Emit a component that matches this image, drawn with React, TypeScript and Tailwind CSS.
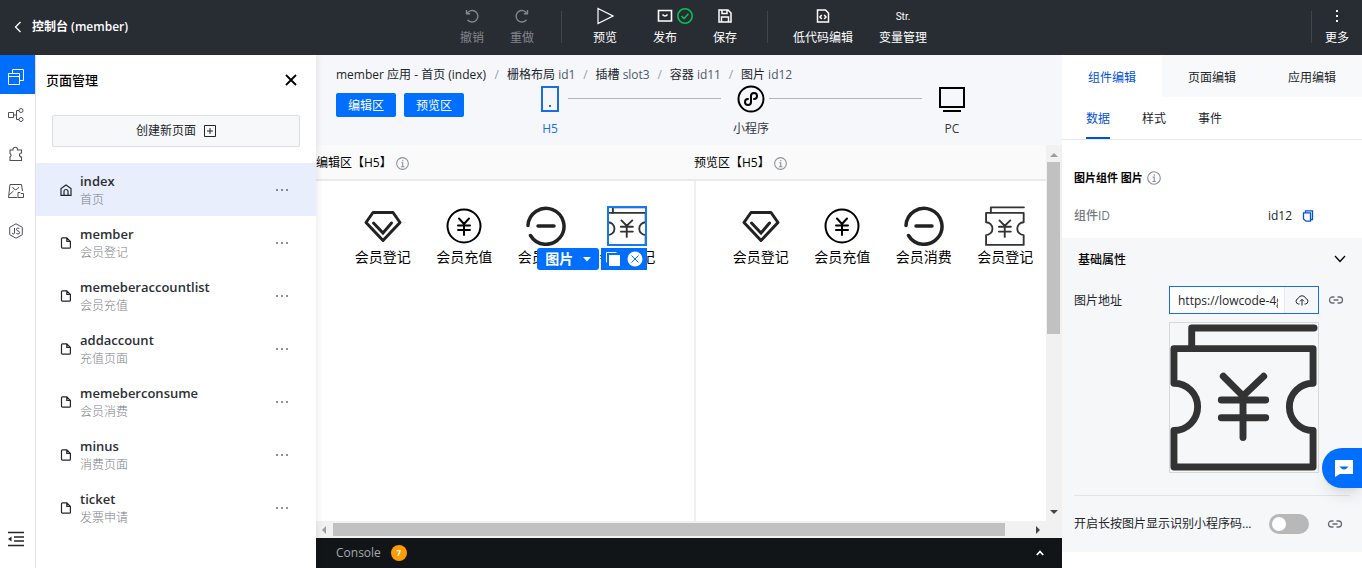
import { useState, type ReactNode } from 'react'
import clsx from 'clsx'

const pages = [
  { name: 'index', title: '首页' },
  { name: 'member', title: '会员登记' },
  { name: 'memeberaccountlist', title: '会员充值' },
  { name: 'addaccount', title: '充值页面' },
  { name: 'memeberconsume', title: '会员消费' },
  { name: 'minus', title: '消费页面' },
  { name: 'ticket', title: '发票申请' },
]

const crumbs = [
  { label: '栅格布局', id: 'id1' },
  { label: '插槽', id: 'slot3' },
  { label: '容器', id: 'id11' },
  { label: '图片', id: 'id12' },
]

type IconProps = { size?: number; box?: number; className?: string; children: ReactNode; width?: number }

const Icon = ({ size = 16, box = 16, width = 1, className, children }: IconProps) => (
  <svg
    width={size}
    height={size}
    viewBox={`0 0 ${box} ${box}`}
    fill="none"
    stroke="currentColor"
    strokeWidth={width}
    className={clsx('shrink-0', className)}
    aria-hidden="true"
  >
    {children}
  </svg>
)

const TicketIcon = ({ size = 40 }: { size?: number }) => (
  <Icon size={size} box={150} width={7} className="text-[#333]">
    <g strokeLinejoin="round" strokeLinecap="round">
      <path d="M22 25V5H146" />
      <path d="M4 26H145V61A24 24 0 0 0 145 109V146H4V109A24 24 0 0 0 4 61Z" />
      <path d="M54 54L74 74L95 54M74 74V116M52 78H97M52 96H97" />
    </g>
  </Icon>
)

const DiamondIcon = () => (
  <Icon size={40} box={40} width={3} className="text-[#222]">
    <path d="M10 6.500H30L37 16.500L20 34.500L3 16.500Z" strokeLinejoin="round" />
    <path d="M10.500 17L20 27L28.500 17" strokeLinecap="round" />
  </Icon>
)

const CoinIcon = () => (
  <Icon size={40} box={40} width={2} className="text-black">
    <circle cx="20" cy="20" r="16.500" />
    <path d="M15 12.500L20 18L25 12.500M20 18V29M14 19.500H26M14 24H26" strokeLinecap="round" />
  </Icon>
)

const MinusIcon = () => (
  <Icon size={40} box={40} width={3.5} className="text-[#222]">
    <path d="M2 19.500A18 18 0 1 1 4.500 29.500" strokeLinecap="round" />
    <path d="M12 20H28" strokeLinecap="round" />
  </Icon>
)

const InfoIcon = ({ size = 13 }: { size?: number }) => (
  <Icon size={size} className="text-[#8a8f98]" width={1.3}>
    <circle cx="8" cy="8" r="7.200" />
    <path d="M6.500 7H8.300V12M6.200 12H10.200M8.300 3.800V5.300" />
  </Icon>
)

const LinkIcon = () => (
  <Icon className="text-[#666b75]" width={1.3}>
    <path d="M6.500 5H4.500a3 3 0 0 0 0 6H6.500M9.500 5H11.500a3 3 0 0 1 0 6H9.500M5.500 8H10.500" />
  </Icon>
)

const FileIcon = () => (
  <Icon size={12} box={12} width={1.2}>
    <path d="M2.500 .800H6.800L10.400 4.400V10.200a1 1 0 0 1-1 1H2.500a1 1 0 0 1-1-1V1.800a1 1 0 0 1 1-1ZM6.800 .800V4.400H10.400" />
  </Icon>
)

const HomeIcon = () => (
  <Icon size={12} box={12} width={1.2}>
    <path d="M1 11.300V4.500L6 .900L11 4.500V11.300ZM4 11V7.500a2 2 0 0 1 4 0V11" />
  </Icon>
)

type ToolProps = { label: string; className: string; children: ReactNode }

const Tool = ({ label, className, children }: ToolProps) => (
  <button className={clsx('flex flex-col items-center shrink-0', className)}>
    <span className="flex h-5 items-center justify-center gap-1">{children}</span>
    <span className="mt-0.5 h-5 text-xs leading-5">{label}</span>
  </button>
)

const Divider = () => <span className="h-8 w-px shrink-0 bg-[#41464e]" />

const Header = () => (
  <header className="flex h-[55px] shrink-0 items-center bg-[#282c33] pb-px text-white">
    <div className="flex flex-1 items-center">
      <a href="#console" className="flex items-center gap-1.5 pl-2.5 text-xs font-semibold">
        <Icon width={1.3}>
          <path d="M10.500 3L5.500 8L10.500 13" />
        </Icon>
        控制台 (member)
      </a>
    </div>
    <div className="flex items-center pl-6">
      <Tool label="撤销" className="w-[50px] text-[#83868b]">
        <Icon width={1.4}>
          <path d="M2.500 2V5.700H6.200M3 5.500A5.800 5.800 0 1 1 3.500 11.800" />
        </Icon>
      </Tool>
      <Tool label="重做" className="w-[50px] text-[#83868b]">
        <Icon width={1.4}>
          <path d="M13.500 2V5.700H9.800M13 5.500A5.800 5.800 0 1 0 12.500 11.800" />
        </Icon>
      </Tool>
      <span className="flex w-7 justify-center">
        <Divider />
      </span>
      <Tool label="预览" className="w-[60px]">
        <Icon size={18} box={18} width={1.2}>
          <path d="M2 1.500L17 9L2 16.500Z" />
        </Icon>
      </Tool>
      <div className="relative">
        <Tool label="发布" className="w-[60px]">
          <Icon width={1.6}>
            <path d="M1.500 2.500H14.500V13H1.500ZM5.500 6.500Q8 9.500 10.500 6.500" />
          </Icon>
        </Tool>
        <Icon className="absolute top-0.5 left-[42px] text-[#0abf5b]" width={1.6}>
          <circle cx="8" cy="8" r="7.200" />
          <path d="M4.500 8L7 10.500L11.500 5.800" />
        </Icon>
      </div>
      <Tool label="保存" className="w-[60px]">
        <Icon width={1.5}>
          <path d="M2 2H11L14 5V14H2ZM5 2V5.500H10V2M4.500 14V9H11.500V14" />
        </Icon>
      </Tool>
      <span className="flex w-6 justify-center">
        <Divider />
      </span>
      <Tool label="低代码编辑" className="w-[88px]">
        <Icon width={1.5}>
          <path d="M2.500 2H10.500L13.500 5V14H2.500ZM6.800 7L5 9L6.800 11M9.200 7L11 9L9.200 11" />
        </Icon>
      </Tool>
      <Tool label="变量管理" className="w-[72px]">
        <span className="font-['Roboto',sans-serif] text-[10px]">Str.</span>
      </Tool>
    </div>
    <div className="flex flex-1 items-center justify-end">
      <Divider />
      <Tool label="更多" className="w-[50px]">
        <Icon>
          <g fill="currentColor" stroke="none">
            <path d="M7 2h2v2H7zM7 7h2v2H7zM7 12h2v2H7z" />
          </g>
        </Icon>
      </Tool>
    </div>
  </header>
)

const Rail = () => (
  <nav className="flex w-9 shrink-0 flex-col border-r border-[#e3e5ea] bg-white text-[#4b4f57]">
    <button aria-label="页面管理" className="flex h-[39px] items-center justify-center bg-[#006eff] pt-1 pr-1 text-white">
      <Icon>
        <path d="M.500 4.500H11.500V15.500H.500ZM.500 7.500H11.500M4.500 4V.500H15.500V11.500H12" />
      </Icon>
    </button>
    <button aria-label="数据源" className="flex h-[39px] items-center justify-center pt-0.5 pr-1">
      <Icon>
        <path d="M.500 5.500H5.500V10.500H.500ZM5.500 8H8M11 3.500H8.500V12.500H11" />
        <circle cx="13" cy="3.500" r="2" />
        <circle cx="13" cy="12.500" r="2" />
      </Icon>
    </button>
    <button aria-label="组件" className="flex h-[39px] items-center justify-center pt-0.5 pr-1">
      <Icon width={1.1}>
        <path d="M2 4H5A2.300 2.300 0 1 1 9.500 4H13.500V7A2 2 0 1 0 13.500 11V14.500H2V11A2 2 0 0 0 2 7.500Z" />
      </Icon>
    </button>
    <button aria-label="素材" className="flex h-[38px] items-center justify-center pr-1">
      <Icon>
        <path d="M9.500 14.500H.500L2 1.500H13.500L14.500 8M4.500 4Q7.500 9.500 11 4M1 12L5.500 8M10 14.500V9.500H12L13 10.500H15.500V14.500Z" />
      </Icon>
    </button>
    <button aria-label="JS" className="flex h-[39px] items-center justify-center pt-0.5 pr-1">
      <Icon>
        <path d="M8 .800L14.300 4.300V11.700L8 15.200L1.700 11.700V4.300Z" />
        <path d="M6.500 5V10Q6.500 11 5.300 11Q4.200 11 4.200 9.800M11.500 6Q11 5 9.800 5Q8.500 5 8.500 6.500Q8.500 7.600 10 8Q11.600 8.300 11.600 9.600Q11.600 11 10 11Q8.700 11 8.300 9.900" />
      </Icon>
    </button>
    <button aria-label="收起" className="mt-auto mb-5 flex justify-center pr-1 text-[#22252b]">
      <Icon size={18} box={18} width={1.6}>
        <path d="M1 2.500H17M7 7H17M7 11H17M1 15.500H17" />
        <path d="M1 9L4.500 6.500V11.500Z" fill="currentColor" stroke="none" />
      </Icon>
    </button>
  </nav>
)

const PagePanel = () => (
  <aside className="z-10 flex w-[280px] shrink-0 flex-col bg-white shadow-[2px_0_6px_rgba(0,0,0,0.08)]">
    <div className="flex h-[50px] items-center justify-between pr-[18px] pl-2.5">
      <h2 className="pt-0.5 text-[13px] font-medium text-black">页面管理</h2>
      <button aria-label="关闭">
        <Icon size={14} box={14} width={1.8} className="text-black">
          <path d="M2 2L12 12M12 2L2 12" />
        </Icon>
      </button>
    </div>
    <button className="mx-4 mt-2.5 flex h-8 items-center justify-center gap-2 rounded-xs border border-[#dcdfe4] bg-[#f7f8f9] text-xs">
      创建新页面
      <Icon size={12} box={12}>
        <path d="M.500 .500H11.500V11.500H.500ZM6 3V9M3 6H9" />
      </Icon>
    </button>
    <ul className="mt-4">
      {pages.map((page, i) => (
        <li
          key={page.name}
          className={clsx('flex h-[53px] items-center pr-7 pl-6', i === 0 && 'bg-[#e8eefb]')}
        >
          {i === 0 ? <HomeIcon /> : <FileIcon />}
          <a href={`#${page.name}`} className="ml-2 flex-1 pt-0.5">
            <span className="block text-[13px] leading-[18px] font-semibold text-[#2b2f36]">{page.name}</span>
            <span className="block text-xs leading-5 font-light text-[#7b7f87]">{page.title}</span>
          </a>
          <button aria-label="更多操作">
            <Icon size={12} box={12}>
              <path d="M0 6H2M5 6H7M10 6H12" />
            </Icon>
          </button>
        </li>
      ))}
    </ul>
  </aside>
)

const Step = ({ label, active, children }: { label: string; active?: boolean; children: ReactNode }) => (
  <button className={clsx('flex w-9 shrink-0 flex-col items-center', active ? 'text-[#1a6fe0]' : 'text-[#33373e]')}>
    <span className={clsx('flex h-7', !active && 'text-black')}>{children}</span>
    <span className="mt-1.5 text-xs leading-5 whitespace-nowrap">{label}</span>
  </button>
)

const StageHead = () => (
  <div className="h-[90px] shrink-0 bg-[#f5f7fa] pt-2.5 pl-5 text-xs">
    <div className="flex h-5 items-center whitespace-nowrap text-[#22252b]">
      <a href="#index">member 应用 - 首页 (index)</a>
      {crumbs.map((c, i) => (
        <span key={c.id} className="flex">
          <span className={clsx('text-center text-[#9aa0a8]', i === 0 ? 'w-[21px]' : 'w-5')}>/</span>
          <a href={`#${c.id}`}>
            {c.label} <span className="text-[#4f5966]">{c.id}</span>
          </a>
        </span>
      ))}
    </div>
    <div className="flex items-start">
      <div className="mt-2 flex gap-2 text-white">
        <button className="h-6 w-[60px] rounded-xs bg-[#006eff] pt-0.5">编辑区</button>
        <button className="h-6 w-[60px] rounded-xs bg-[#006eff] pt-0.5">预览区</button>
      </div>
      <div className="ml-[68px] flex w-[438px] items-start">
        <Step label="H5" active>
          <Icon size={28} box={28} width={2}>
            <path d="M6 2H22V26H6Z" />
            <path d="M13 21H15" />
          </Icon>
        </Step>
        <span className="mt-[13px] mr-3 h-px flex-1 bg-[#b0b5bc]" />
        <Step label="小程序">
          <Icon size={28} box={28} width={2}>
            <circle cx="14" cy="14" r="12.500" />
            <path d="M11 14A3 3 0 1 0 14 17V11A3 3 0 1 1 17 14" strokeLinecap="round" />
          </Icon>
        </Step>
        <span className="mt-[13px] mr-3 h-px flex-1 bg-[#b0b5bc]" />
        <Step label="PC">
          <Icon size={28} box={28} width={2}>
            <path d="M2 3H26V22H2ZM5 26H23" />
          </Icon>
        </Step>
      </div>
    </div>
  </div>
)

const Selection = () => (
  <>
    <span className="absolute inset-0 border-2 border-[#1478f0]" />
    <div className="absolute top-[42px] right-0 z-10 flex gap-0.5 text-white">
      <button className="flex h-[22px] w-[62px] items-center justify-center gap-2.5 rounded-[3px] bg-[#006eff] text-sm font-bold whitespace-nowrap">
        图片
        <Icon size={8} box={8}>
          <path d="M0 2H8L4 6.500Z" fill="currentColor" stroke="none" />
        </Icon>
      </button>
      <div className="flex h-[22px] w-[46px] items-center justify-center gap-1.5 bg-[#006eff]">
        <button aria-label="复制">
          <Icon>
            <path d="M1.500 11.500V1.500H11.500" />
            <path d="M4 4H15V15H4Z" fill="currentColor" stroke="none" />
          </Icon>
        </button>
        <button aria-label="删除">
          <Icon>
            <circle cx="8" cy="8" r="7.500" fill="currentColor" stroke="none" />
            <path d="M4.500 4.500L11.500 11.500M11.500 4.500L4.500 11.500" className="stroke-[#006eff]" />
          </Icon>
        </button>
      </div>
    </div>
  </>
)

const entries = [
  { label: '会员登记', icon: <DiamondIcon /> },
  { label: '会员充值', icon: <CoinIcon /> },
  { label: '会员消费', icon: <MinusIcon /> },
  { label: '会员登记', icon: <TicketIcon /> },
]

const Pane = ({ title, editing }: { title: string; editing?: boolean }) => (
  <section className="flex w-[378px] shrink-0 flex-col">
    <h3 className="flex h-9 shrink-0 items-center border-b-2 border-[#e9eaec] bg-[#fafafa] pt-0.5 text-xs text-black">
      {title}
      <span className="ml-1">
        <InfoIcon />
      </span>
    </h3>
    <div className={clsx('flex-1 bg-white pt-[25px] pr-[26px]', editing ? 'pl-[26px]' : 'border-l-2 border-[#eeeff1] pl-6')}>
      <ul className="grid grid-cols-4">
        {entries.map((e, i) => (
          <li key={i} className="flex flex-col items-center text-sm leading-[22px] text-black">
            <span className="relative">
              {e.icon}
              {editing && i === 3 && <Selection />}
            </span>
            <span className="whitespace-nowrap">{e.label}</span>
          </li>
        ))}
      </ul>
    </div>
  </section>
)

const Arrow = ({ d, dim }: { d: string; dim?: boolean }) => (
  <Icon size={8} box={8} className={dim ? 'text-[#9c9c9c]' : 'text-[#444]'}>
    <path d={d} fill="currentColor" stroke="none" />
  </Icon>
)

const Stage = () => (
  <main className="flex min-w-0 flex-1 flex-col">
    <StageHead />
    <div className="flex min-h-0 flex-1 bg-[#f0f0f0] pr-px">
      <div className="flex min-w-0 flex-1 flex-col">
        <div className="flex min-h-0 flex-1 overflow-hidden bg-white">
          <Pane title="编辑区【H5】" editing />
          <Pane title="预览区【H5】" />
        </div>
        <div className="flex h-[17px] items-center gap-[5px] bg-[#f1f1f1] px-1">
          <Arrow d="M6 0V8L2 4Z" dim />
          <span className="h-[13px] w-[672px] bg-[#c1c1c1]" />
          <span className="ml-auto">
            <Arrow d="M2 0V8L6 4Z" />
          </span>
        </div>
      </div>
      <div className="flex w-[15px] flex-col items-center bg-[#f1f1f1] pt-1.5 pb-[22px]">
        <Arrow d="M0 6H8L4 2Z" dim />
        <span className="mt-[3px] h-[172px] w-[13px] bg-[#c1c1c1]" />
        <span className="mt-auto">
          <Arrow d="M0 2H8L4 6Z" />
        </span>
      </div>
    </div>
    <footer className="flex h-[30px] shrink-0 items-center bg-[#121518] pr-[18px] pl-5 text-xs text-[#a6a9ad]">
      Console
      <span className="ml-2.5 flex size-4 items-center justify-center rounded-full bg-[#ff9c00] text-[8px] font-bold text-white">
        7
      </span>
      <button aria-label="展开" className="ml-auto text-white">
        <Icon size={8} box={8} width={1.8}>
          <path d="M.800 6L4 2.500L7.200 6" />
        </Icon>
      </button>
    </footer>
  </main>
)

const SettingsPanel = () => {
  const [tab, setTab] = useState('组件编辑')
  const [sub, setSub] = useState('数据')
  const [url, setUrl] = useState('https://lowcode-4gxample')

  return (
    <aside className="flex w-[300px] shrink-0 flex-col bg-white text-xs">
      <div className="flex h-[42px] shrink-0">
        {['组件编辑', '页面编辑', '应用编辑'].map(t => (
          <button
            key={t}
            onClick={() => setTab(t)}
            className={clsx('flex-1 pt-1', t === tab ? 'text-[#0052d9]' : 'bg-[#f8f9fa]')}
          >
            {t}
          </button>
        ))}
      </div>
      <div className="flex h-[43px] shrink-0 gap-8 border-b border-[#e6e8eb] px-6">
        {['数据', '样式', '事件'].map(t => (
          <button
            key={t}
            onClick={() => setSub(t)}
            className={clsx('border-b-2 pt-1', t === sub ? 'border-[#0052d9] text-[#0052d9]' : 'border-transparent')}
          >
            {t}
          </button>
        ))}
      </div>
      <div className="px-3">
        <h3 className="mt-7 flex h-5 items-center gap-1 text-[11px] font-bold text-black">
          图片组件 图片 <InfoIcon size={14} />
        </h3>
        <div className="mt-[18px] flex h-5 items-center pr-9">
          <span className="font-medium text-[#73777f]">组件ID</span>
          <span className="mr-2.5 ml-auto">id12</span>
          <button aria-label="复制ID" className="text-[#0052d9]">
            <Icon size={12} box={12} width={1.3}>
              <path d="M3.500 2.500V.800H10.500V9.500H8.500M1.500 2.800H8.500V11.200H4L1.500 9Z" />
            </Icon>
          </button>
        </div>
      </div>
      <div className="mt-3 h-[314px] shrink-0 bg-[#f6f7f9] px-3">
        <button className="flex h-[42px] w-full items-center justify-between pr-1 pl-1 font-medium text-black">
          <span className="pt-0.5">基础属性</span>
          <Icon size={12} box={12} width={1.3}>
            <path d="M1 3L6 8.500L11 3" />
          </Icon>
        </button>
        <div className="mt-1.5 flex items-center">
          <label htmlFor="src" className="w-[95px] pt-0.5">
            图片地址
          </label>
          <div className="flex h-7 w-[150px] items-center border border-[#1a6fe0] bg-white">
            <span className="min-w-0 flex-1 pt-0.5 pr-1.5 pl-2">
              <input
                id="src"
                value={url}
                onChange={e => setUrl(e.target.value)}
                className="block w-full bg-transparent outline-none"
              />
            </span>
            <button
              aria-label="上传"
              className="flex h-full w-[34px] items-center justify-center border-l border-[#e6e8eb] bg-[#f6f7f9]"
            >
              <Icon size={14} box={14} width={1}>
                <path d="M4.500 11H3.500A2.800 2.800 0 0 1 3.200 5.500A4 4 0 0 1 10.800 5.500A2.800 2.800 0 0 1 10.500 11H9.500M7 12.500V6.500M5 8.300L7 6.300L9 8.300" />
              </Icon>
            </button>
          </div>
          <button aria-label="绑定图片地址" className="ml-[9px]">
            <LinkIcon />
          </button>
        </div>
        <div className="mt-2 ml-[95px] w-[150px] border border-[#d5d8dd] pb-px">
          <TicketIcon size={148} />
        </div>
        <div className="mt-[22px] flex h-[57px] items-center border-t border-[#e1e4e8]">
          <label htmlFor="longpress" className="flex-1 truncate">
            开启长按图片显示识别小程序码...
          </label>
          <input
            id="longpress"
            type="checkbox"
            role="switch"
            className="mr-[18px] h-5 w-10 appearance-none rounded-full bg-[#b8b8b8] before:m-[3px] before:block before:size-3.5 before:rounded-full before:bg-white checked:bg-[#006eff] checked:before:ml-[23px]"
          />
          <button aria-label="绑定开关" className="mr-[7px]">
            <LinkIcon />
          </button>
        </div>
      </div>
    </aside>
  )
}

const App = () => (
  <div className="relative flex h-screen flex-col overflow-hidden bg-white font-['Open_Sans','Noto_Sans_CJK_SC',sans-serif] text-[#22252b]">
    <Header />
    <div className="flex min-h-0 flex-1 overflow-hidden">
      <Rail />
      <PagePanel />
      <Stage />
      <SettingsPanel />
    </div>
    <button
      aria-label="在线客服"
      className="absolute right-0 bottom-20 flex h-10 w-10 items-center justify-center rounded-l-full bg-[#006eff] pl-1 text-white shadow-lg"
    >
      <Icon size={20} box={20}>
        <path d="M1 2H19V16H6L1 19Z" fill="currentColor" stroke="none" />
        <path d="M5.500 8.500H14.500Q10 14.500 5.500 8.500Z" className="fill-[#006eff]" stroke="none" />
      </Icon>
    </button>
  </div>
)

export default App
